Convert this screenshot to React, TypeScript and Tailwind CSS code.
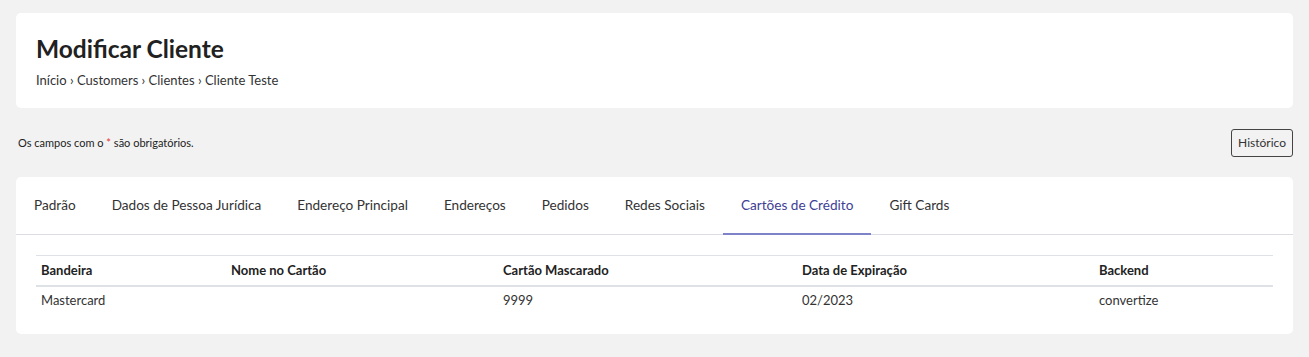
const tabs = [
  "Padrão",
  "Dados de Pessoa Jurídica",
  "Endereço Principal",
  "Endereços",
  "Pedidos",
  "Redes Sociais",
  "Cartões de Crédito",
  "Gift Cards",
];

const columns = [
  { label: "Bandeira", width: "w-[190px]" },
  { label: "Nome no Cartão", width: "w-[272px]" },
  { label: "Cartão Mascarado", width: "w-[299px]" },
  { label: "Data de Expiração", width: "w-[297px]" },
  { label: "Backend", width: "" },
];

const rows = [["Mastercard", "", "9999", "02/2023", "convertize"]];

const App = () => {
  const active = "Cartões de Crédito";

  return (
    <div className="min-h-[357px] bg-[#f2f2f2] px-4 pt-[13px] pb-6 font-['Lato',sans-serif] text-[#212529]">
      {/* Page header */}
      <div className="bg-white rounded-[5px] h-[95px] px-5 pt-[21px]">
        <h1 className="text-[24.5px] font-bold leading-[30px] text-[#212121]">
          Modificar Cliente
        </h1>
        <div className="text-[13px] leading-[16px] mt-[8px] text-[#333]">
          Início › Customers › Clientes › Cliente Teste
        </div>
      </div>

      {/* Required note + history */}
      <div className="flex items-center justify-between mt-[21px] h-[28px]">
        <p className="text-[11px] pl-[2px] text-[#222]">
          Os campos com o <span className="text-[#e3342f]">*</span> são obrigatórios.
        </p>
        <button className="h-[28px] px-[6px] text-[12px] border border-[#444] rounded-[3px] text-[#333] bg-transparent">
          Histórico
        </button>
      </div>

      {/* Tabs card */}
      <div className="bg-white rounded-[5px] mt-[20px] pb-[18px]">
        <div className="flex border-b border-[#dcdde3] h-[58px]">
          {tabs.map((tab) => (
            <div
              key={tab}
              className={
                tab === active
                  ? "px-[18px] flex items-center text-[13.6px] text-[#3e4095] border-b-2 border-[#7e82c8] -mb-px"
                  : "px-[18px] flex items-center text-[13.6px] text-[#333]"
              }
            >
              {tab}
            </div>
          ))}
        </div>

        <div className="px-5 pt-5">
          <table className="w-full border-collapse text-[13px]">
            <thead>
              <tr className="border-t border-[#dee2e6] border-b-2">
                {columns.map((col) => (
                  <th
                    key={col.label}
                    className={`${col.width} text-left font-bold pl-[5px] h-[30px] text-[#222]`}
                  >
                    {col.label}
                  </th>
                ))}
              </tr>
            </thead>
            <tbody>
              {rows.map((row, i) => (
                <tr key={i}>
                  {row.map((cell, j) => (
                    <td key={j} className="pl-[5px] h-[30px] text-[#333]">
                      {cell}
                    </td>
                  ))}
                </tr>
              ))}
            </tbody>
          </table>
        </div>
      </div>
    </div>
  );
};

export default App;
